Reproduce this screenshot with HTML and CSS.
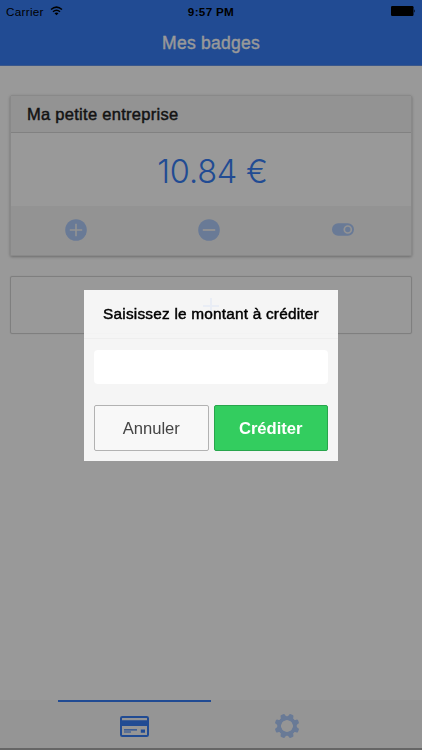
FILE: index.html
```
<!DOCTYPE html>
<html lang="fr">
<head>
    <meta charset="UTF-8">
    <meta name="viewport" content="width=device-width, initial-scale=1.0">
    <title>Mes badges</title>
    <link rel="stylesheet" href="styles.css">
</head>
<body>
    <div class="app">
        <header class="header">
            <div class="status-bar">
                <div class="carrier">
                    <span>Carrier</span>
                    <svg width="13" height="10" viewBox="0 0 13 10">
                        <path d="M1 3.5 Q6.5 -1.3 12 3.5 M3 5.7 Q6.5 2.7 10 5.7" fill="none" stroke="#000" stroke-width="1.5"/>
                        <path d="M4.5 7.2 Q6.5 5.6 8.5 7.2 L6.5 9.3 Z"/>
                    </svg>
                </div>
                <span class="time">9:57 PM</span>
                <div class="battery">
                    <svg width="25" height="10" viewBox="0 0 25 10">
                        <rect width="22.5" height="10" rx="1.2"/>
                        <path d="M23.2 3.3 Q24.8 5 23.2 6.7 Z"/>
                    </svg>
                </div>
            </div>
            <h1 class="title">Mes badges</h1>
        </header>

        <main class="content">
            <!-- Badge card -->
            <section class="card">
                <h2 class="card-header">Ma petite entreprise</h2>
                <div class="card-amount"><span>10.84 €</span></div>
                <div class="card-actions">
                    <div class="action">
                        <svg width="22" height="22" viewBox="0 0 22 22">
                            <circle cx="11" cy="11" r="10.8" fill="#afcbfb"/>
                            <path d="M4.8 11 H17.2 M11 4.8 V17.2" stroke="#f5f5f5" stroke-width="1.6"/>
                        </svg>
                    </div>
                    <div class="action">
                        <svg width="22" height="22" viewBox="0 0 22 22">
                            <circle cx="11" cy="11" r="10.8" fill="#afcbfb"/>
                            <path d="M4.8 11 H17.2" stroke="#f5f5f5" stroke-width="1.8"/>
                        </svg>
                    </div>
                    <div class="action">
                        <svg width="22" height="13" viewBox="0 0 22 13">
                            <rect y="0.3" width="22" height="12.4" rx="6.2" fill="#afcbfb"/>
                            <circle cx="15.8" cy="6.5" r="3.5" fill="none" stroke="#f5f5f5" stroke-width="1.7"/>
                        </svg>
                    </div>
                </div>
            </section>

            <!-- Add a badge -->
            <section class="add-card">
                <svg width="16" height="16" viewBox="0 0 16 16">
                    <path d="M0 8 H16 M8 0 V16" stroke="#387ef5" stroke-width="2"/>
                </svg>
            </section>
        </main>

        <nav class="tabs">
            <div class="tab tab-active">
                <svg width="29" height="21" viewBox="0 0 29 21">
                    <rect x="1" y="1" width="27" height="19" rx="1.3" fill="none" stroke="#387ef5" stroke-width="2"/>
                    <path d="M1 4.2 H28 V10 H1 Z M20.8 13.5 H25 V16.8 H20.8 Z" fill="#387ef5"/>
                    <path d="M4 13.9 H17 M4 16 H11" stroke="#387ef5" stroke-width="1.1"/>
                </svg>
            </div>
            <div class="tab">
                <svg width="26" height="26" viewBox="0 0 26 26" fill="#afcbfb">
                    <g id="teeth">
                        <path id="tooth" d="M8.5 5.4 Q10.6 4.2 10.6 2.2 Q10.6 0.6 12 0.6 H14 Q15.4 0.6 15.4 2.2 Q15.4 4.2 17.5 5.4 L15.5 7 H10.5 Z" transform="rotate(22.5 13 13)"/>
                        <use href="#tooth" transform="rotate(45 13 13)"/>
                        <use href="#tooth" transform="rotate(90 13 13)"/>
                        <use href="#tooth" transform="rotate(135 13 13)"/>
                    </g>
                    <use href="#teeth" transform="rotate(180 13 13)"/>
                    <circle cx="13" cy="13" r="7.9" fill="none" stroke="#afcbfb" stroke-width="3.6"/>
                </svg>
            </div>
        </nav>
    </div>

    <!-- Credit popup -->
    <div class="backdrop">
        <div class="popup">
            <div class="popup-head"><h3>Saisissez le montant à créditer</h3></div>
            <div class="popup-body">
                <input class="popup-input" type="text" aria-label="Montant">
            </div>
            <div class="popup-buttons">
                <button class="button">Annuler</button>
                <button class="button button-credit">Créditer</button>
            </div>
        </div>
    </div>
</body>
</html>
```
FILE: styles.css
```
* {
    box-sizing: border-box;
}

body {
    margin: 0;
    font-family: "Liberation Sans", Arial, sans-serif;
    background-color: #fff;
    overflow: hidden;
}

.app {
    display: flex;
    flex-direction: column;
    height: 750px;
}

.header {
    height: 66px;
    background-color: #387ef5;
    border-bottom: 1px solid #6292e8;
}

.status-bar {
    display: grid;
    grid-template-columns: 1fr auto 1fr;
    height: 22px;
    padding: 0 6px;
    align-items: center;
    font-size: 11.7px;
    letter-spacing: 0.3px;
}

.carrier {
    display: flex;
    align-items: center;
    gap: 6px;
}

.time {
    font-weight: bold;
}

.battery {
    display: flex;
    justify-content: flex-end;
}

.title {
    margin: 0;
    color: #fff;
    font-size: 17.5px;
    font-weight: normal;
    letter-spacing: 0.25px;
    line-height: 42px;
    text-align: center;
    -webkit-text-stroke: 0.35px #fff;
}

.content {
    flex: 1;
    padding: 29px 10px 0;
}

.card {
    height: 161px;
    border: 1px solid #e4e4e4;
    border-radius: 2px;
    box-shadow: 0 1px 3px rgba(0, 0, 0, 0.3);
}

.card-header {
    height: 37px;
    margin: 0;
    padding: 0 16px;
    background-color: #f5f5f5;
    border-bottom: 1px solid #d8d8d8;
    color: #222;
    font-size: 16.5px;
    font-weight: normal;
    letter-spacing: 0.28px;
    line-height: 36px;
    -webkit-text-stroke: 0.45px #222;
}

.card-amount {
    height: 73px;
    color: #387ef5;
    font-family: Inter, sans-serif;
    font-size: 32.5px;
    font-weight: 300;
    letter-spacing: -0.2px;
    line-height: 77px;
    text-align: center;
    padding-left: 3px;
}

.card-actions {
    display: grid;
    grid-template-columns: repeat(3, 1fr);
    height: 49px;
    background-color: #f5f5f5;
}

.action {
    display: flex;
    align-items: center;
    justify-content: center;
    padding: 0 4px 2px 0;
}

.action:last-child {
    padding-right: 2px;
}

.add-card {
    display: flex;
    justify-content: center;
    height: 58px;
    margin-top: 20px;
    padding-top: 21px;
    border: 1px solid #d4d4d4;
    border-radius: 2px;
    box-shadow: 0 0 1px #ccc;
}

.tabs {
    display: flex;
    justify-content: center;
    height: 50px;
    background-color: #f8f8f8;
    border-bottom: 2px solid #aaa;
}

.tab {
    display: flex;
    align-items: center;
    justify-content: center;
    width: 153px;
    padding: 4px 1px 0 0;
}

.tab-active {
    padding: 2px 0 0;
    border-top: 2px solid #387ef5;
}

/* Popup over the dimmed page */
.backdrop {
    position: fixed;
    inset: 0;
    display: flex;
    align-items: center;
    justify-content: center;
    background-color: rgba(0, 0, 0, 0.4);
}

.popup {
    width: 254px;
    height: 171px;
    background-color: rgba(255, 255, 255, 0.9);
}

.popup-head {
    height: 49px;
    border-bottom: 1px solid #eee;
}

.popup-head h3 {
    margin: 0;
    font-size: 15.4px;
    font-weight: normal;
    letter-spacing: 0.2px;
    line-height: 48px;
    text-align: center;
    white-space: nowrap;
    -webkit-text-stroke: 0.45px #000;
}

.popup-body {
    padding: 11px 10px 0;
}

.popup-input {
    display: block;
    width: 100%;
    height: 34px;
    padding: 0 8px;
    border: none;
    border-radius: 4px;
    background-color: #fff;
    font-size: 15px;
}

.popup-buttons {
    display: flex;
    gap: 5px;
    padding: 21px 10px 0;
}

.button {
    flex: 1;
    height: 46px;
    padding: 2px 0 0;
    border: 1px solid #b2b2b2;
    border-radius: 2px;
    background-color: #f8f8f8;
    color: #444;
    font-family: inherit;
    font-size: 16.6px;
}

.button-credit {
    border-color: #28a54c;
    background-color: #33cd5f;
    color: #fff;
    font-weight: bold;
}
```
